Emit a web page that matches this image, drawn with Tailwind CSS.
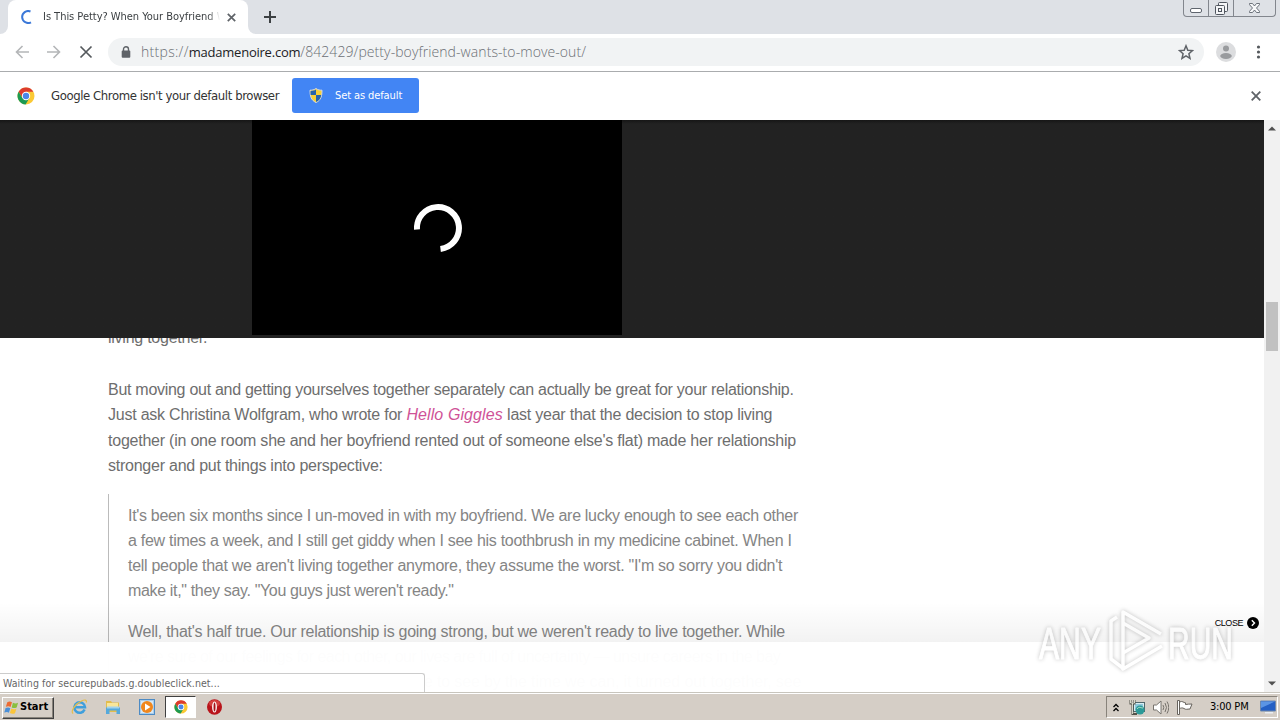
<!DOCTYPE html>
<html lang="en">
<head>
  <meta charset="UTF-8">
  <meta name="viewport" content="width=device-width, initial-scale=1.0">
  <title>Is This Petty? When Your Boyfriend Wants To Move Out</title>
  <script src="https://cdn.jsdelivr.net/npm/@tailwindcss/browser@4"></script>
</head>
<body class="w-[1280px] h-[720px] overflow-hidden bg-white font-['DejaVu_Sans_Condensed','DejaVu_Sans',sans-serif]">
<!-- Shared chrome logo -->
<svg class="hidden">
  <symbol id="chrome" viewBox="0 0 18 18">
    <circle cx="9" cy="9" r="8.5" fill="#fbc934"/>
    <path d="M1.6 4.8A8.5 8.5 0 0 1 16.4 4.8H9L5.4 11z" fill="#dc3b2e"/>
    <path d="M1.6 4.8A8.5 8.5 0 0 0 8.6 17.5L12.4 11 5.4 11z" fill="#1c9a52"/>
    <circle cx="9" cy="9" r="4.2" fill="#fff"/>
    <circle cx="9" cy="9" r="3.2" fill="#4a86e8"/>
  </symbol>
</svg>

<div class="relative flex flex-col w-[1280px] h-[720px]">
  <!-- Tab strip -->
  <div class="flex h-[34px] shrink-0 bg-[#dee1e6]">
    <div class="w-2 bg-white"><div class="h-full rounded-br-lg bg-[#dee1e6]"></div></div>
    <div class="flex items-center w-[240px] rounded-t-lg bg-white pl-3">
      <svg class="w-3.5 h-3.5 shrink-0" viewBox="0 0 14 14" fill="none" stroke="#3b78d8" stroke-width="2"><path d="M10.5 1.5A6 6 0 1 0 11 12.3"/></svg>
      <div class="ml-[9px] w-[177px] overflow-hidden whitespace-nowrap text-[11px] tracking-[-0.03px] text-[#3c4043] mask-r-from-[165px] mask-r-to-[177px]">Is This Petty? When Your Boyfriend W</div>
      <svg class="ml-[7px] w-[9px] h-[9px] shrink-0" viewBox="0 0 9 9" stroke="#5f6368" stroke-width="1.7"><path d="M.8.8l7.4 7.4M8.2.8L.8 8.2"/></svg>
    </div>
    <div class="w-2 bg-white"><div class="h-full rounded-bl-lg bg-[#dee1e6]"></div></div>
    <svg class="ml-2 mt-[11px] w-3 h-3" viewBox="0 0 12 12" stroke="#3c4043" stroke-width="2"><path d="M6 0v12M0 6h12"/></svg>
    <!-- Window buttons -->
    <div class="ml-auto mr-1 flex w-[93px] h-[17px] rounded-b border border-t-0 border-[#82868d]">
      <div class="w-[25px] border-r border-[#82868d] flex justify-center pt-2"><div class="w-3 h-[5px] rounded-xs border border-[#5f656e] bg-white"></div></div>
      <div class="w-[25px] border-r border-[#82868d] flex justify-center pt-0.5">
        <svg class="w-[13px] h-[13px]" viewBox="0 0 13 13" fill="#f4f5f7" stroke="#4f555e"><rect x="3.5" y=".5" width="9" height="9" rx="1"/><rect x=".5" y="3.5" width="9" height="9" rx="1"/><rect x="3.5" y="6.5" width="3" height="3"/></svg>
      </div>
      <div class="flex-1 flex justify-center pt-[3px]">
        <svg class="w-[11px] h-[10px]" viewBox="0 0 11 10" fill="#f7f8fa" stroke="#5f656e" stroke-width=".9"><path d="M.5.5h3l2 2.5 2-2.5h3v1.2L7.5 5l3 3.3v1.2h-3l-2-2.5-2 2.5h-3V8.3l3-3.3-3-3.3z"/></svg>
      </div>
    </div>
  </div>

  <!-- Toolbar -->
  <div class="flex items-center h-[38px] shrink-0 border-b border-[#aaacae] bg-white pl-[15px] pb-px">
    <svg class="w-[14px] h-[14px]" viewBox="0 0 14 14" fill="none" stroke="#b4b6b8" stroke-width="1.6"><path d="M14 7H1.5M7.5 1l-6 6 6 6"/></svg>
    <svg class="ml-[18px] w-[14px] h-[14px]" viewBox="0 0 14 14" fill="none" stroke="#b4b6b8" stroke-width="1.6"><path d="M0 7h12.5M6.5 1l6 6-6 6"/></svg>
    <svg class="ml-[18px] w-[14px] h-[14px]" viewBox="0 0 14 14" stroke="#55595d" stroke-width="1.7"><path d="M1.5 1.5l11 11M12.500 1.500l-11 11"/></svg>
    <div class="ml-[15px] flex items-center w-[1096px] h-7 rounded-full bg-[#f1f3f4] pl-[13px] pr-[10px]">
      <svg class="w-[10px] h-[12px]" viewBox="0 0 10 12"><path d="M2.5 5V3.2a2.5 2.5 0 0 1 5 0V5" fill="none" stroke="#5f6368" stroke-width="1.4"/><rect x=".7" y="4.5" width="8.6" height="7.2" rx="1" fill="#5f6368"/></svg>
      <div class="ml-[10px] text-[14px] whitespace-nowrap font-['Open_Sans',sans-serif] font-light text-[#6b6f74]"><span class="tracking-[0.3px]">https://</span><span class="text-[13px] tracking-[-0.23px] font-normal text-[#202124]">madamenoire.com</span><span class="tracking-[0.08px]">/842429/petty-boyfriend-wants-to-move-out/</span></div>
      <svg class="ml-auto w-4 h-4" viewBox="0 0 16 16" fill="none" stroke="#5f6368" stroke-width="1.5"><path d="M8 1.8l1.8 4.4 4.7.4-3.6 3.1 1.1 4.6L8 11.8l-4 2.500 1.100-4.600L1.500 6.600l4.700-.4z"/></svg>
    </div>
    <svg class="ml-3 w-5 h-5" viewBox="0 0 20 20"><circle cx="10" cy="10" r="10" fill="#dcdddf"/><circle cx="10" cy="6.5" r="3" fill="#999b9e"/><ellipse cx="10" cy="14" rx="5.8" ry="2.9" fill="#999b9e"/></svg>
    <svg class="ml-[20px] w-[5px] h-[14px]" viewBox="0 0 5 14" fill="#55595d"><circle cx="2.5" cy="2" r="1.6"/><circle cx="2.5" cy="7" r="1.6"/><circle cx="2.5" cy="12" r="1.6"/></svg>
  </div>

  <!-- Default browser bar -->
  <div class="flex items-center h-12 shrink-0 bg-white pl-[17px] pr-[19px]">
    <svg class="w-[18px] h-[18px]"><use href="#chrome"/></svg>
    <div class="ml-4 w-[229px] text-[13px] whitespace-nowrap tracking-[-0.41px] text-[#333]">Google Chrome isn't your default browser</div>
    <div class="ml-3 -mt-px flex items-center w-[127px] h-[35px] rounded-[3px] bg-[#4285f4] pl-[17px] text-[11px] text-white">
      <svg class="w-[14px] h-[15px]" viewBox="0 0 14 15"><path d="M7 .5C5 2 3 2.2 1 2.2c0 6 1 10 6 12.3 5-2.3 6-6.3 6-12.3C11 2.2 9 2 7 .5z" fill="#f7d038" stroke="#d5dbe2"/><path d="M7 1.5V7H1.7C1.4 5.5 1.5 4 1.6 2.9 4 2.9 5.5 2.5 7 1.5zM7 7h5.3c-.6 3.5-2 5.5-5.3 6.9z" fill="#2663ad"/></svg>
      <span class="ml-3 mt-px whitespace-nowrap tracking-[-0.1px]">Set as default</span>
    </div>
    <svg class="ml-auto w-[10px] h-[10px]" viewBox="0 0 10 10" stroke="#5f6368" stroke-width="1.8"><path d="M.7.7l8.6 8.6M9.3.7L.7 9.3"/></svg>
  </div>

  <!-- Page -->
  <div class="relative flex h-[572px] shrink-0">
    <div class="relative w-[1264px] h-full overflow-hidden font-['Liberation_Sans',sans-serif]">
      <div class="h-[218px] bg-linear-to-b from-[#161616] to-[#222] to-[4px] pl-[252px]">
        <div class="flex items-center justify-center w-[370px] h-[215px] bg-black">
          <svg class="w-12 h-12 ml-0.5" viewBox="0 0 48 48" fill="none" stroke="#fff" stroke-width="6"><path d="M3 25.5A21 21 0 1 1 26.5 44.9"/></svg>
        </div>
      </div>
      <div class="h-[354px] overflow-hidden pl-[108px] text-[16px] leading-[25.2px] whitespace-nowrap text-[#6e6e6e]">
        <p class="-mt-[13px] tracking-[-0.25px]">living together.</p>
        <p class="mt-[27px]"><span class="tracking-[-0.28px]">But moving out and getting yourselves together separately can actually be great for your relationship.</span><br>
          <span class="tracking-[-0.23px]">Just ask Christina Wolfgram, who wrote for </span><em class="tracking-[0.1px] text-[#cf5297]">Hello Giggles</em><span class="tracking-[-0.23px]"> last year that the decision to stop living</span><br>
          <span class="tracking-[-0.23px]">together (in one room she and her boyfriend rented out of someone else's flat) made her relationship</span><br>
          <span class="tracking-[-0.24px]">stronger and put things into perspective:</span></p>
        <blockquote class="mt-[16px] border-l border-[#bbb] pl-[19px] pt-[9px] h-[220px] leading-[25px] text-[#858585]">
          <p><span class="tracking-[-0.31px]">It's been six months since I un-moved in with my boyfriend. We are lucky enough to see each other</span><br>
            <span class="tracking-[-0.28px]">a few times a week, and I still get giddy when I see his toothbrush in my medicine cabinet. When I</span><br>
            <span class="tracking-[-0.28px]">tell people that we aren't living together anymore, they assume the worst. "I'm so sorry you didn't</span><br>
            <span class="tracking-[-0.34px]">make it," they say. "You guys just weren't ready."</span></p>
          <p class="mt-[16px]"><span class="tracking-[-0.26px]">Well, that's half true. Our relationship is going strong, but we weren't ready to live together. While</span><br>
            <span class="tracking-[-0.53px]">we're sure of our feelings for each other, our lives are full of uncertainty — unsure careers in the bay</span><br>
            <span class="tracking-[-0.14px]">area, but mostly for the first time, being able to see by the time we can, it turned out together, see</span></p>
        </blockquote>
      </div>
      <!-- Bottom ad panel -->
      <div class="absolute left-0 bottom-0 w-full">
        <div class="flex justify-end h-10 bg-linear-to-b from-black/0 to-black/5 pr-[5px] pt-[14px]">
          <div class="flex items-center gap-1 h-[14px] text-[9px] text-black">
            <span class="mt-px tracking-[-0.45px]">CLOSE</span>
            <svg class="w-3 h-3" viewBox="0 0 12 12"><circle cx="6" cy="6" r="6"/><path d="M4.8 3.3L7.5 6 4.8 8.7" fill="none" stroke="#fff" stroke-width="1.4"/></svg>
          </div>
        </div>
        <div class="h-[50px] bg-white/98"></div>
      </div>
      <!-- Status bubble -->
      <div class="absolute left-0 bottom-0 w-[425px] h-[19px] rounded-tr-[3px] border-t border-r border-[#ccc] bg-white pl-[3px] text-[10.5px] leading-[19px] tracking-[0.08px] text-[#666] font-['DejaVu_Sans_Condensed',sans-serif]">Waiting for securepubads.g.doubleclick.net...</div>
    </div>
    <!-- Scrollbar -->
    <div class="flex flex-col items-center justify-between w-4 bg-[#f1f1f1] pt-[6px] pb-[6px]">
      <svg class="w-2 h-[5px]" viewBox="0 0 8 5" fill="#505050"><path d="M0 4.5L4 .5l4 4z"/></svg>
      <div class="w-3 h-[49px] bg-[#c1c1c1] -mt-[160px]"></div>
      <svg class="w-2 h-[5px]" viewBox="0 0 8 5" fill="#505050"><path d="M0 .5l4 4 4-4z"/></svg>
    </div>
  </div>

  <!-- Taskbar -->
  <div class="flex items-center h-7 shrink-0 border-t border-[#c8c5bd] bg-[#d5cec6] pl-0.5 pr-[2px] shadow-[inset_0_1px_0_#fff]">
    <div class="flex items-center w-[52px] h-[22px] mt-0.5 border border-t-white border-l-white border-r-[#404040] border-b-[#404040] shadow-[inset_-1px_-1px_0_#88837b] pl-px">
      <svg class="w-[15px] h-[15px] shrink-0" viewBox="0 0 16 15"><path d="M3.5 2C5.5.8 7 1 8.5 2L7 7C5.5 6 4 6 2 6.8z" fill="#ed6b32"/><path d="M9.5 2.5c2 1 3.5 1 5.5 0l-1.5 5c-2 .8-3.7.8-5.3 0z" fill="#8abf3f"/><path d="M1.7 8c2-.8 3.4-.8 5 .2L5.2 13C4 12 2.5 12 .3 12.8z" fill="#4a8fd8"/><path d="M7.8 8.6c1.8 1 3.5 1 5.4.1l-1.5 4.8c-2 1-3.8.8-5.4-.2z" fill="#fbc53a"/></svg>
      <span class="ml-px text-[11px] font-bold text-black">Start</span>
    </div>
    <!-- Internet Explorer -->
    <svg class="ml-[17px] w-[17px] h-4" viewBox="0 0 17 16" fill="none"><path d="M13.6 10.6A5.3 5.3 0 1 1 14 8.2H4.5" stroke="#3f9fdc" stroke-width="2.5"/><path d="M2.2 14.5C-1 13 4 5 10 2.2c4-2 6-1.5 5.3 1.3" stroke="#e5bd4a" stroke-width="1.2"/></svg>
    <!-- Explorer folder -->
    <svg class="ml-[17px] w-4 h-4" viewBox="0 0 16 16"><path d="M1 2h5l1 1.5h7V13H1z" fill="#e2bd4d"/><path d="M2 4h11v4H2z" fill="#f9e69a"/><path d="M1 8.5h14V15h-3.5v-3.5h-7V15H1z" fill="#55a9dc"/><path d="M2 7.5h12v2H2z" fill="#a0d2ee"/></svg>
    <!-- Media player -->
    <svg class="ml-[18px] w-4 h-4" viewBox="0 0 16 16"><rect x=".5" y=".5" width="15" height="15" fill="#a9cdeb" stroke="#4d8bc4"/><rect x="2" y="2" width="12" height="12" fill="#d7e9f6"/><circle cx="8" cy="8" r="6" fill="#f0871d"/><path d="M6 4.5L11.5 8 6 11.5z" fill="#fff"/></svg>
    <!-- Chrome, active -->
    <div class="ml-[10px] flex items-center justify-center w-[31px] h-[22px] border border-t-[#404040] border-l-[#404040] border-r-white border-b-white bg-white">
      <svg class="w-[14px] h-[14px]"><use href="#chrome"/></svg>
    </div>
    <!-- Opera -->
    <svg class="ml-[11px] w-[15px] h-4" viewBox="0 0 15 16"><ellipse cx="7.5" cy="8" rx="7.5" ry="7.8" fill="#b9141b"/><ellipse cx="7.5" cy="4.5" rx="5.5" ry="3.5" fill="#d4413f"/><ellipse cx="7.5" cy="8" rx="2.4" ry="5.5" fill="#fff"/><ellipse cx="7.5" cy="8" rx="1" ry="4.5" fill="#a51117"/></svg>
    <!-- Tray -->
    <div class="ml-auto mt-px flex items-center w-[172px] h-[22px] border border-t-[#88837b] border-l-[#88837b] border-r-white border-b-white pl-[6px]">
      <svg class="w-[6px] h-[9px]" viewBox="0 0 6 9" fill="none" stroke="#000" stroke-width="1.3"><path d="M.5 4L3 1.5 5.5 4M.5 8L3 5.5 5.5 8"/></svg>
      <svg class="ml-[10px] w-4 h-[15px]" viewBox="0 0 16 15"><rect x="4.5" y="2.5" width="11" height="9" fill="#d8eef1" stroke="#50676c"/><rect x="6" y="4" width="8" height="6" fill="#8fc9dc"/><circle cx="11" cy="10" r="4.5" fill="#2c9a98"/><path d="M8 9c2-3 4-1 6-1" stroke="#b6e5c8" fill="none"/><path d="M1.5 0v3.5h4V0M3.5 3.5V14H8" fill="none" stroke="#53534b" stroke-width="2"/><path d="M1.5 0v3h4V0M3.5 3V14" fill="none" stroke="#f5f5e8" stroke-width=".8"/></svg>
      <svg class="ml-2 w-4 h-[15px]" viewBox="0 0 16 15" fill="none" stroke="#77736d"><path d="M.5 5h3L8 1v13l-4.5-4h-3z" fill="#fff"/><path d="M10 5q1.5 2.5 0 5M12 3q3 4.5 0 9M14 1.5q3.5 6 0 12"/></svg>
      <svg class="ml-2 w-4 h-[15px]" viewBox="0 0 16 15" fill="#fff" stroke="#67635d"><path d="M2.5 2c3-1.5 4 .8 6 .8v1.7c2 0 4-.8 6.5-.5l-2 5c-3 0-4 1-6-.5-1.5-1-3-.5-4.5 0z"/><path d="M.5.5h2v14h-2z"/></svg>
      <span class="ml-[17px] mt-px w-[40px] whitespace-nowrap text-[11px] tracking-[-0.2px] text-black">3:00 PM</span>
      <svg class="ml-[10px] w-4 h-[14px]" viewBox="0 0 16 14"><path d="M.5 1h15v10h-15z" fill="#245fc4" stroke="#6d87ac"/><path d="M1 1.5h14L1 8z" fill="#5b94e4"/><path d="M5 12h8v1.5H5z" fill="#e9edf2"/></svg>
    </div>
  </div>

  <!-- Recorder watermark -->
  <div class="absolute left-[1036px] top-[606px] w-[200px] h-[68px] opacity-60 drop-shadow-[0_0_2px_rgba(0,0,0,0.4)]">
    <svg class="w-[200px] h-[68px]" viewBox="0 0 200 68" fill="none" stroke="#fff" stroke-width="3.5" stroke-linejoin="round">
      <g font-family="Liberation Sans Narrow, Liberation Sans, sans-serif" font-size="45" fill="#fff" stroke="#fff" stroke-width="1">
        <text x="3" y="53" textLength="62" lengthAdjust="spacingAndGlyphs">ANY</text>
        <text x="132" y="53" textLength="65" lengthAdjust="spacingAndGlyphs">RUN</text>
      </g>
      <path d="M126 40L87 63V6l38 22"/><path d="M87 17l26 15-26 15"/><path d="M81 11l-6 4v38l13 10"/>
    </svg>
  </div>
</div>
</body>
</html>
